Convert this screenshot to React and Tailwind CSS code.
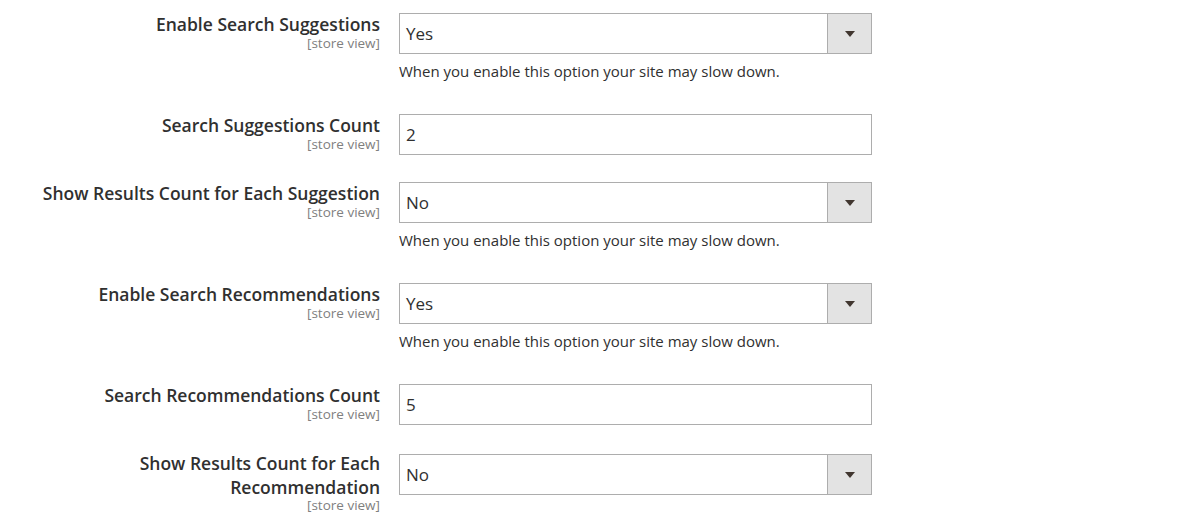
const rows = [
  { label: ["Enable Search Suggestions"], type: "select", value: "Yes", note: true },
  { label: ["Search Suggestions Count"], type: "text", value: "2" },
  { label: ["Show Results Count for Each Suggestion"], type: "select", value: "No", note: true },
  { label: ["Enable Search Recommendations"], type: "select", value: "Yes", note: true },
  { label: ["Search Recommendations Count"], type: "text", value: "5" },
  { label: ["Show Results Count for Each", "Recommendation"], type: "select", value: "No", shift: true },
];

function Field({ row }) {
  if (row.type === "text") {
    return (
      <div className="h-[41px] border border-[#adadad] bg-white flex items-center pl-[6px] text-[17px] text-[#303030]">
        {row.value}
      </div>
    );
  }
  return (
    <div className="h-[41px] border border-[#adadad] bg-white flex">
      <div className="flex-1 flex items-center pl-[6px] text-[17px] text-[#303030]">{row.value}</div>
      <div className="w-[44px] border-l border-[#adadad] bg-[#e3e3e3] flex items-center justify-center">
        <svg width="10" height="6" viewBox="0 0 10 6">
          <path d="M0 0H10L5 6Z" fill="#41362f" />
        </svg>
      </div>
    </div>
  );
}

export default function App() {
  return (
    <div className="w-[1191px] h-[531px] overflow-hidden bg-white pt-[13px] font-['Open_Sans',sans-serif]">
      {rows.map((row, i) => (
        <div key={i} className="flex mb-[27px]">
          <div className="w-[380px] text-right shrink-0">
            {row.label.map((l) => (
              <div key={l} className="text-[17.5px] leading-[23.5px] font-semibold text-[#303030]">
                {l}
              </div>
            ))}
            <div className="text-[13.5px] leading-[13px] text-[#808080]">[store view]</div>
          </div>
          <div className={`ml-[19px] w-[473px] ${row.shift ? "mt-[2px]" : ""}`}>
            <Field row={row} />
            {row.note && (
              <div className="text-[15px] leading-[20px] text-[#303030] mt-[7px] mb-[6px]">
                When you enable this option your site may slow down.
              </div>
            )}
          </div>
        </div>
      ))}
    </div>
  );
}
